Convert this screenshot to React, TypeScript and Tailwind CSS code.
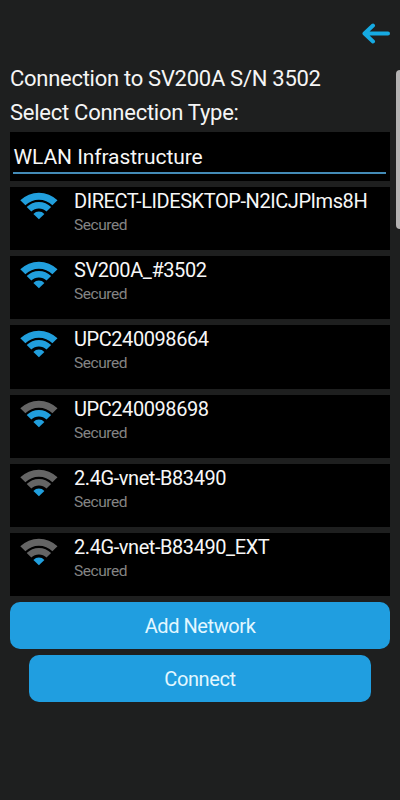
interface Network {
  ssid: string;
  strength: 1 | 2 | 3;
}

const networks: Network[] = [
  { ssid: 'DIRECT-LIDESKTOP-N2ICJPIms8H', strength: 3 },
  { ssid: 'SV200A_#3502', strength: 3 },
  { ssid: 'UPC240098664', strength: 3 },
  { ssid: 'UPC240098698', strength: 2 },
  { ssid: '2.4G-vnet-B83490', strength: 1 },
  { ssid: '2.4G-vnet-B83490_EXT', strength: 1 },
];

const BLUE = '#219fdd';
const GREY = '#656565';

const WifiIcon = ({ strength }: { strength: number }) => (
  <svg width="38" height="28" viewBox="0 0.5 38 28" className="shrink-0">
    <path
      d="M.3 8.8A26.5 26.5 0 0 1 37.5 8.8L32.4 13.8A19 19 0 0 0 5.4 13.8Z"
      fill={strength >= 3 ? BLUE : GREY}
    />
    <path
      d="M6.7 15.6A17 17 0 0 1 31.1 15.6L26.5 20.1A10.8 10.8 0 0 0 11.3 20.1Z"
      fill={strength >= 2 ? BLUE : GREY}
    />
    <path d="M13.4 22.4A7.7 7.7 0 0 1 24.4 22.4L18.9 27.8Z" fill={BLUE} />
  </svg>
);

const NetworkRow = ({ network }: { network: Network }) => (
  <li className="flex h-[63.2px] bg-black pl-[10px] pt-[5px]">
    <WifiIcon strength={network.strength} />
    <div className="ml-4 -mt-[3px] whitespace-nowrap">
      <p className="text-[20px] leading-6 tracking-[-0.43px] text-[#f7f7f7]">{network.ssid}</p>
      <p className="text-[15.5px] leading-6 tracking-[-0.45px] text-[#848484]">Secured</p>
    </div>
  </li>
);

export default function App() {
  return (
    <div className="relative h-[800px] w-[400px] overflow-hidden bg-[#1e1f1f] font-['Roboto',sans-serif]">
      <header className="flex h-[62px] justify-end pr-[10px] pt-[23px]">
        <svg
          width="28"
          height="21"
          viewBox="0 0 28 21"
          fill="none"
          stroke="#16aae2"
          strokeWidth="4"
          strokeLinecap="round"
          strokeLinejoin="round"
        >
          <path d="M26 10.5H2.5M11 2.5L2.5 10.5L11 18.5" />
        </svg>
      </header>

      <main className="px-[10px]">
        <h1 className="h-[35px] whitespace-nowrap text-[22px] leading-[34px] tracking-[-0.28px] text-[#f5f5f5]">
          Connection to SV200A S/N 3502
        </h1>
        <h2 className="h-[35px] whitespace-nowrap text-[22px] leading-[32px] tracking-[-0.26px] text-[#f5f5f5]">
          Select Connection Type:
        </h2>

        <div className="h-[49px] bg-black pl-[3px] pr-[4px] pt-[9px]">
          <div className="h-[33px] border-b-2 border-[#438bb7] pl-[0.5px] text-[21px] leading-8 tracking-[-0.08px] text-[#f7f7f7]">
            WLAN Infrastructure
          </div>
        </div>

        <ul className="mt-[6px] flex flex-col gap-[6px]">
          {networks.map((network) => (
            <NetworkRow key={network.ssid} network={network} />
          ))}
        </ul>

        <button className="mt-[6px] block h-[47px] w-full rounded-[10px] bg-[#209ee0] text-[20px] tracking-[-0.42px] text-[#e2f7ff]">
          Add Network
        </button>
        <button className="mx-auto mt-[6px] block h-[47px] w-[342px] rounded-[10px] bg-[#209ee0] text-[20px] tracking-[-0.38px] text-[#e2f7ff]">
          Connect
        </button>
      </main>

      {/* scroll thumb */}
      <div className="absolute -right-1 top-[70px] h-[159px] w-2 rounded-[4px] bg-[#b5b3b3]" />
    </div>
  );
}
